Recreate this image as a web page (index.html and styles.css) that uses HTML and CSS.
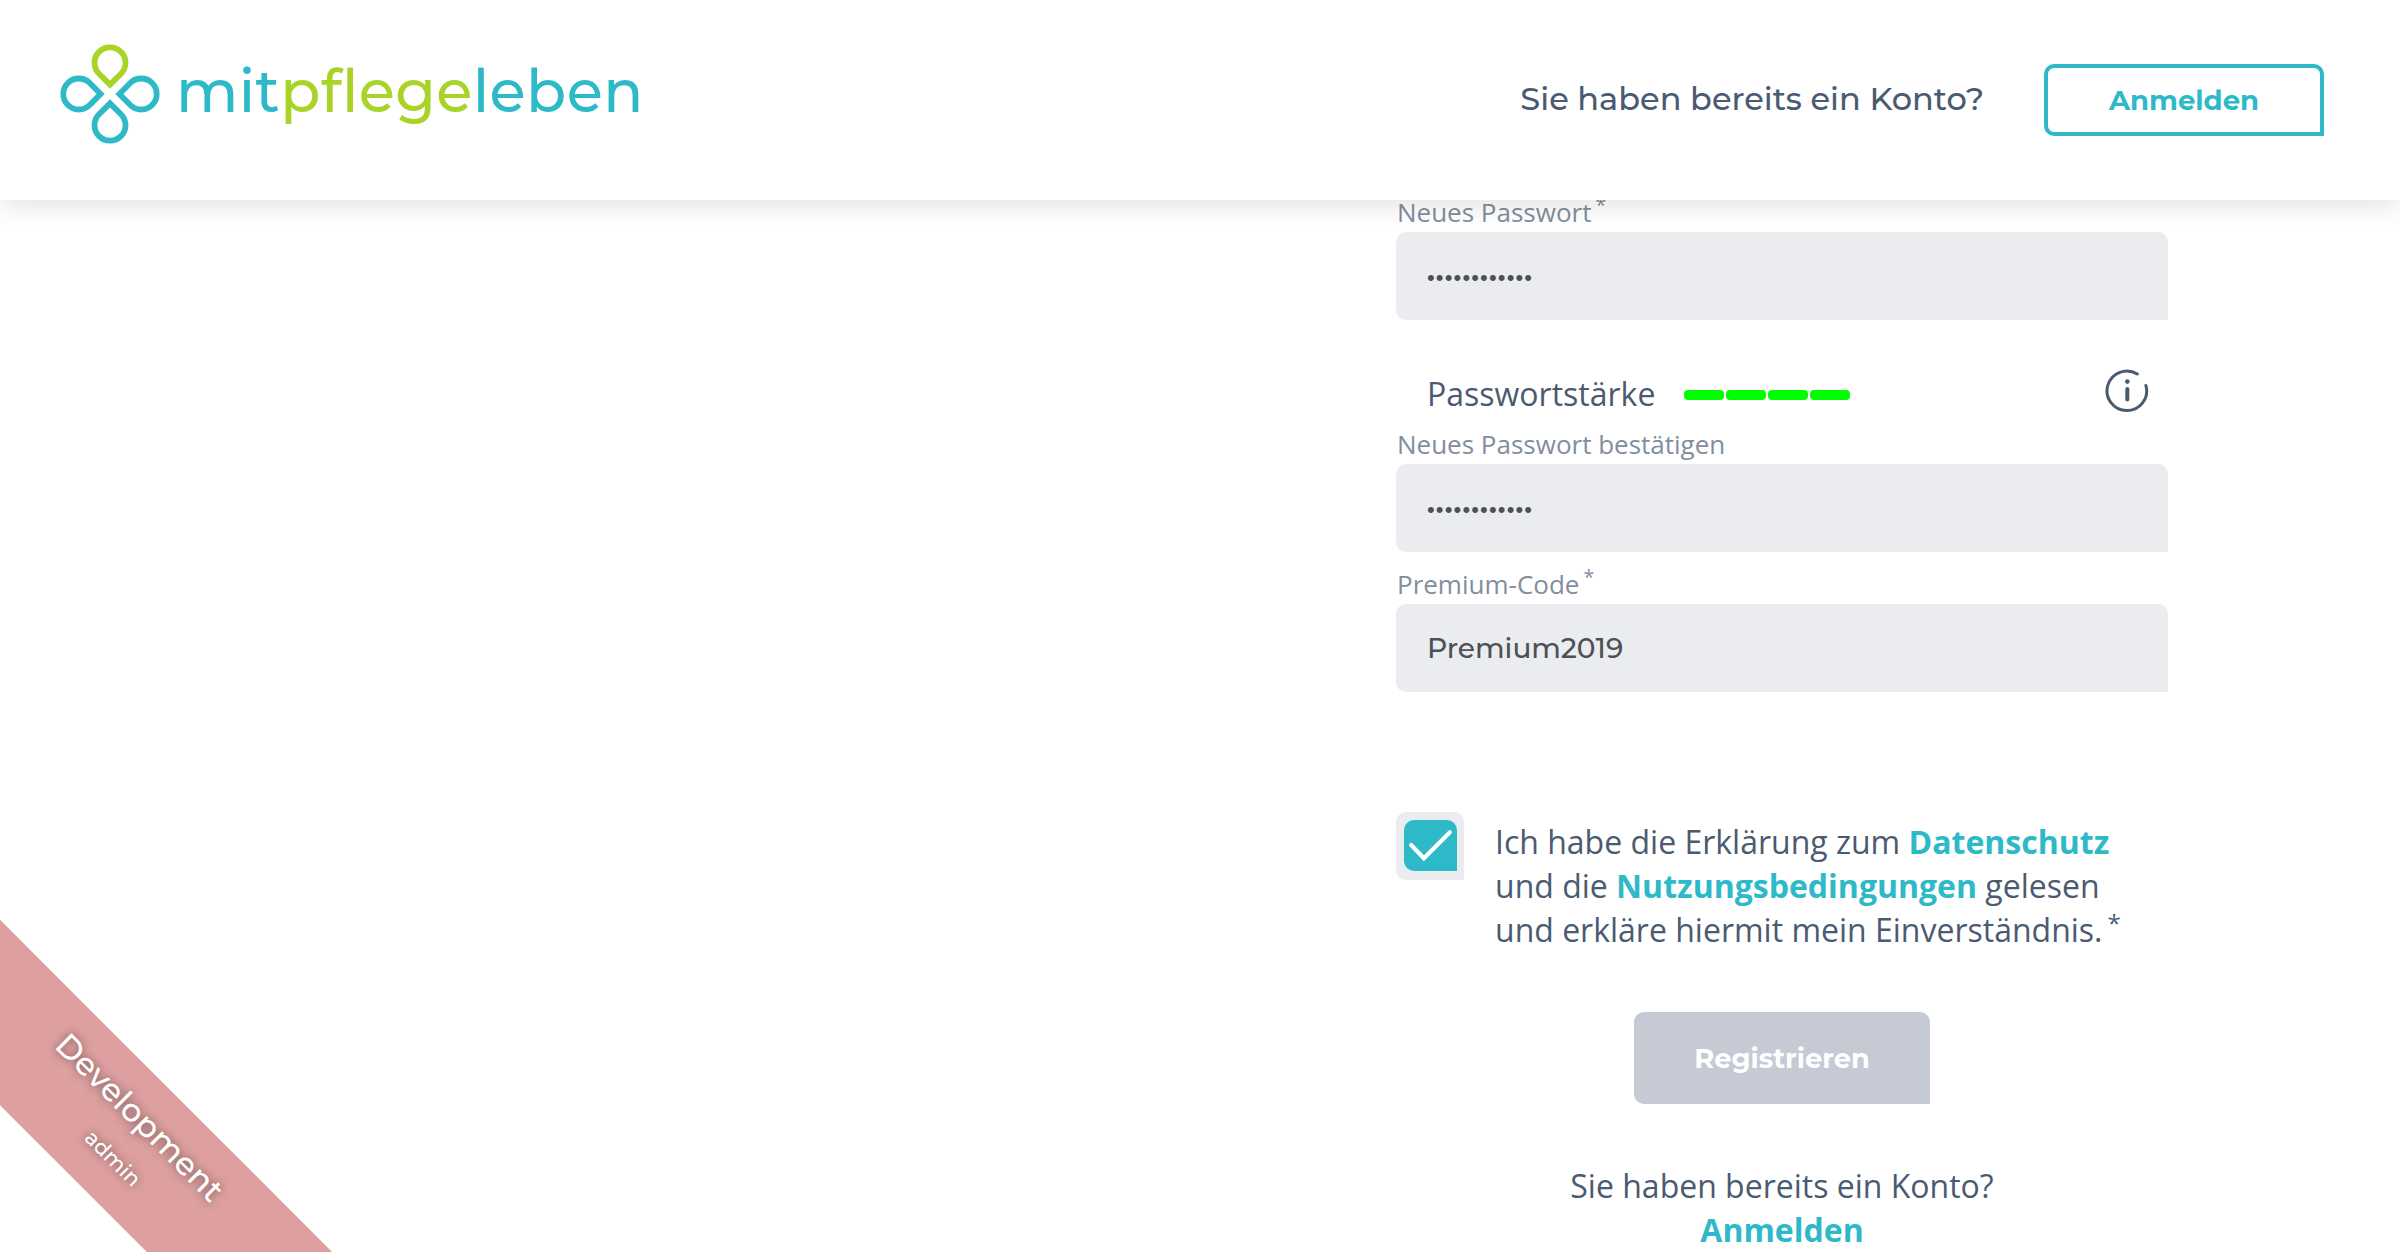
FILE: index.html
```html
<!DOCTYPE html>
<html lang="de">
<head>
<meta charset="utf-8">
<title>mitpflegeleben</title>
<link rel="stylesheet" href="styles.css">
</head>
<body>
<header class="header">
  <a class="logo">
    <svg class="logo-mark" viewBox="-50 -50 100 100">
      <path class="petal petal-green" d="M0-9.4L-10.96-20.24A15.5 15.5 0 1 1 10.96-20.24Z"/>
      <path class="petal" transform="rotate(90)" d="M0-9.4L-10.96-20.24A15.5 15.5 0 1 1 10.96-20.24Z"/>
      <path class="petal" transform="rotate(180)" d="M0-9.4L-10.96-20.24A15.5 15.5 0 1 1 10.96-20.24Z"/>
      <path class="petal" transform="rotate(270)" d="M0-9.4L-10.96-20.24A15.5 15.5 0 1 1 10.96-20.24Z"/>
    </svg>
    <span class="logo-text">mit<span class="logo-green">pflege</span>leben</span>
  </a>
  <div class="header-actions">
    <span class="header-question">Sie haben bereits ein Konto?</span>
    <a class="button-outline">Anmelden</a>
  </div>
</header>
<main class="form">
  <label class="label">Neues Passwort<sup>*</sup></label>
  <input class="field password" type="password" value="abcdefghijkl">
  <div class="strength">
    <span>Passwortstärke</span>
    <div class="bars"><i></i><i></i><i></i><i></i></div>
    <svg class="info" viewBox="-22 -22 44 44">
      <path d="M10.3-17A19.8 19.8 0 1 0 18.9-5.5"/>
      <path class="info-stem" d="M.3-2V8.6"/>
      <circle cx=".3" cy="-9.4" r="2.3"/>
    </svg>
  </div>
  <label class="label">Neues Passwort bestätigen</label>
  <input class="field password" type="password" value="abcdefghijkl">
  <label class="label code">Premium-Code<sup>*</sup></label>
  <input class="field" type="text" value="Premium2019">
  <div class="consent">
    <span class="checkbox"><svg viewBox="0 0 52 50"><path d="M7 24.5L19.5 37.5L45 12"/></svg></span>
    <p class="consent-text">Ich habe die Erklärung zum <b>Datenschutz</b><br>und die <b>Nutzungsbedingungen</b> gelesen<br>und erkläre hiermit mein Einverständnis.<sup>*</sup></p>
  </div>
  <button class="submit">Registrieren</button>
  <p class="login-hint">Sie haben bereits ein Konto?<br><b>Anmelden</b></p>
</main>
<div class="ribbon"><span class="ribbon-title">Development</span><span class="ribbon-user">admin</span></div>
</body>
</html>
```
FILE: styles.css
```css
* { box-sizing: border-box; }
html { overflow: hidden; }
body { margin: 0; height: 1252px; position: relative; overflow: hidden; background: #fff; color: #4a5b71; font: 32px/44px "Open Sans", sans-serif; }
b { color: #2eb9c8; font-weight: 700; }
.header { position: relative; z-index: 2; height: 200px; display: flex; align-items: flex-start; justify-content: space-between; padding: 43px 76px 0 60px; background: #fff; box-shadow: 0 4px 26px rgba(0, 0, 0, .13); font-family: Montserrat, Inter, sans-serif; }
.logo { display: flex; color: #2eb9c8; }
.logo-mark { width: 100px; height: 100px; margin-top: 1px; }
.petal { fill: none; stroke: #2eb9c8; stroke-width: 5.8; }
.petal-green { stroke: #a9d327; }
.logo-text { margin-left: 16px; font-size: 59px; line-height: 96px; font-weight: 500; letter-spacing: .36px; white-space: nowrap; }
.logo-green { color: #a9d327; }
.header-actions { display: flex; align-items: center; margin-top: 21px; height: 72px; }
.header-question { margin-top: -2px; font-size: 32px; font-weight: 500; white-space: nowrap; }
.button-outline { margin-left: 60px; width: 280px; height: 72px; border: 4px solid #2eb9c8; border-radius: 10px 10px 0 10px; color: #2eb9c8; font-size: 27.5px; font-weight: 700; line-height: 64px; text-align: center; }
.form { width: 772px; margin-left: 1396px; display: flex; flex-direction: column; }
.form > * { flex-shrink: 0; }
.label { height: 32px; padding-left: 1px; font-size: 26px; line-height: 24px; color: #828e9e; }
sup { margin-left: 4px; font-size: .75em; line-height: 0; }
.field { height: 88px; border: 0; border-radius: 10px 10px 0 10px; background: #ebecf0; padding: 0 31px; color: #4c5156; font: 500 28px Montserrat, Inter, sans-serif; }
.password { padding-top: 3px; font: 22px "Liberation Sans", sans-serif; letter-spacing: 1.15px; }
.strength { height: 112px; padding: 52px 19px 0 31px; display: flex; align-items: flex-start; }
.bars { display: flex; gap: 2px; margin: 18px 0 0 29px; }
.bars i { width: 40px; height: 10px; border-radius: 4px; background: #0f0; }
.info { width: 44px; height: 44px; margin: -3px 0 0 auto; fill: #4a5b71; }
.info path { fill: none; stroke: #4a5b71; stroke-width: 3; stroke-linecap: round; }
.info .info-stem { stroke-width: 4; }
.code { margin-top: 20px; }
.consent { display: flex; margin-top: 120px; }
.checkbox { width: 68px; height: 68px; background: #ebecf0; border-radius: 10px 10px 0 10px; padding: 8px; }
.checkbox svg { display: block; width: 53px; height: 51px; background: #2eb9c8; border-radius: 10px 10px 0 10px; }
.checkbox path { fill: none; stroke: #fff; stroke-width: 4; stroke-linecap: round; }
.consent-text { margin: 8px 0 0 31px; white-space: nowrap; }
.consent-text sup { position: relative; top: 2px; margin-left: 5px; }
.submit { align-self: center; margin-top: 60px; width: 296px; height: 92px; border: 0; border-radius: 10px 10px 0 10px; background: #c5cad5; color: #fff; font: 700 27.3px Montserrat, Inter, sans-serif; }
.login-hint { margin: 60px 0 0; text-align: center; }
.ribbon { position: absolute; left: -172px; top: 1075px; width: 600px; height: 131px; padding-top: 19px; transform: rotate(45deg); background: #dd9f9f; color: #fff; font-family: Montserrat, Inter, sans-serif; font-weight: 500; display: flex; flex-direction: column; align-items: center; text-shadow: 0 0 8px rgba(0, 0, 0, .5); }
.ribbon-title { margin-left: -16px; font-size: 32px; }
.ribbon-user { margin: 4px 0 0 4px; font-size: 21px; }
```
